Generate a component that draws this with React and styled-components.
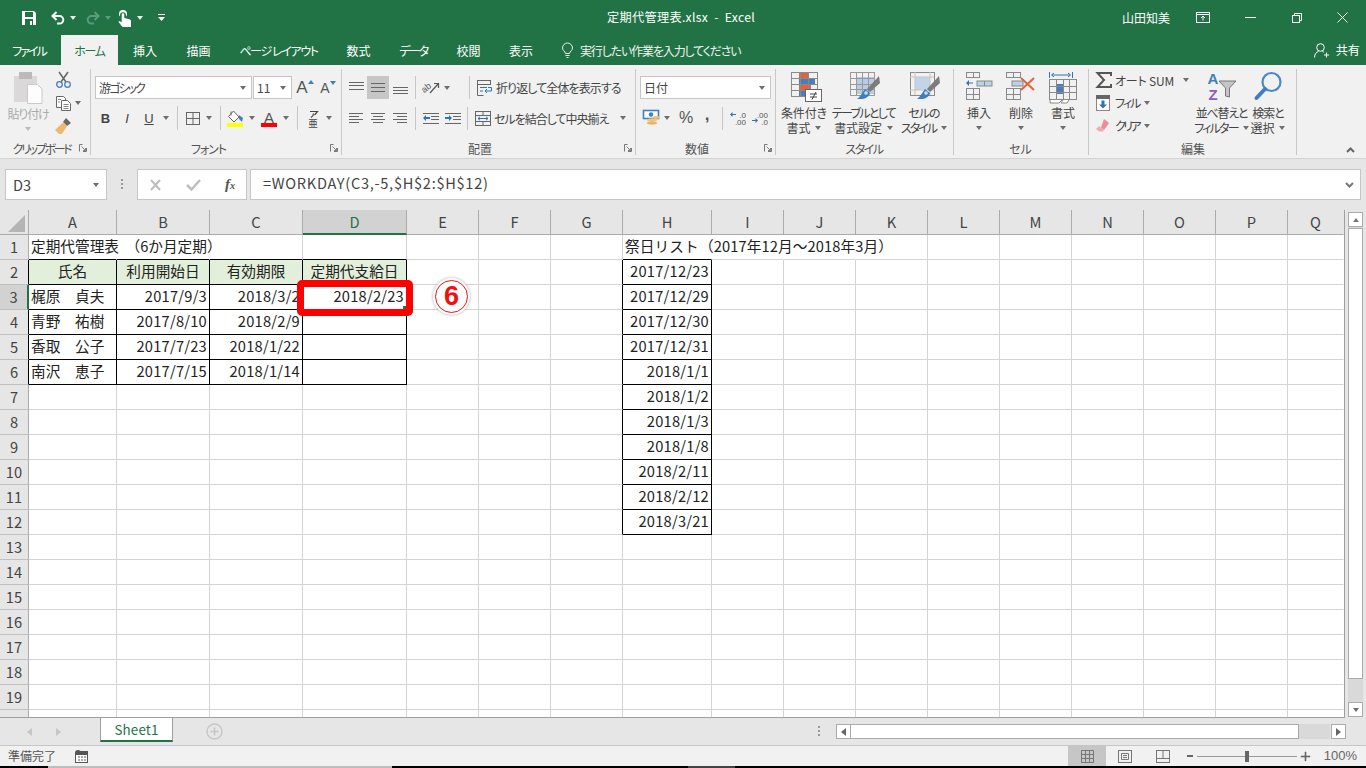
import React from "react";
import styled, { createGlobalStyle } from "styled-components";

const JP = `"Noto Sans CJK JP", "Noto Sans", sans-serif`;

const Global = createGlobalStyle`
  html, body { margin: 0; padding: 0; background: #e6e6e6; overflow: hidden; }
  #root { width: 1366px; height: 768px; }
  * { box-sizing: border-box; }
`;

const Page = styled.div`
  width: 1366px; height: 768px; display: flex; flex-direction: column;
  font-family: ${JP}; overflow: hidden; background: #e6e6e6;
`;

const Ls = styled.span`letter-spacing: ${(p) => p.$v}px;`;

/* title bar */
const TitleBar = styled.div`
  height: 35px; background: #217346; color: #fff; display: grid;
  grid-template-columns: 1fr auto 1fr; align-items: center; font-size: 12px;
  font-feature-settings: "palt";
`;
const Quick = styled.div`display: flex; align-items: center; padding: 1px 0 0 22px;`;
const Slot = styled.div`
  width: ${(p) => p.$w}px; height: ${(p) => p.$h || 20}px; flex: none;
  margin-left: ${(p) => p.$ml || 0}px; display: flex; align-items: center;
  justify-content: ${(p) => p.$start ? "flex-start" : "center"};
  background: ${(p) => p.$on ? "#c6c6c6" : "transparent"};
`;
const Caret = styled.span`
  display: block; width: 0; height: 0; border-left: 3.5px solid transparent; border-right: 3.5px solid transparent;
  border-top: 4px solid ${(p) => p.$c || "#6e6e6e"};
`;
const Title = styled.div`font-size: 12.2px; letter-spacing: .3px; white-space: pre; padding-bottom: 1px; margin-right: 4px; font-feature-settings: normal;`;
const WinControls = styled.div`display: flex; align-items: center; justify-content: flex-end; height: 35px;`;
const UserName = styled.div`width: 48px; font-size: 12px; white-space: nowrap; font-feature-settings: normal; margin-right: 26px;`;

/* tabs */
const TabBar = styled.div`
  height: 30px; background: #217346; display: flex; align-items: stretch; color: #fff;
  font-size: 12px; font-feature-settings: "palt"; position: relative;
`;
const Tab = styled.div`
  width: ${(p) => p.$w}px; display: flex; align-items: center; justify-content: center; white-space: nowrap;
  padding-right: ${(p) => p.$pr || 0}px;
  letter-spacing: ${(p) => p.$ls || 0}px;
  background: ${(p) => p.$on ? "#f1f1f1" : "transparent"}; color: ${(p) => p.$on ? "#217346" : "#fff"};
`;
const Tell = styled.div`display: flex; align-items: center; gap: 7px; margin-left: 15px; color: #f0f5f2; white-space: nowrap; letter-spacing: -1.15px;`;
const Share = styled.div`margin-left: auto; margin-right: 6px; display: flex; align-items: center; gap: 6px; font-feature-settings: normal; font-size: 12.2px;`;

/* ribbon */
const Ribbon = styled.div`
  height: 94px; background: #f1f1f1; border-bottom: 1px solid #d2d2d2; display: flex; align-items: flex-start;
  font-size: 12px; color: #444; font-feature-settings: "palt";
  padding-top: 4px;
`;
const Group = styled.div`
  width: ${(p) => p.$w}px; height: 86px; flex: none; display: flex; flex-direction: column;
  border-right: 1px solid #c8c8c8;
`;
const Body = styled.div`
  height: 72px; display: flex; padding-left: ${(p) => p.$pl || 0}px;
  flex-direction: ${(p) => p.$col ? "column" : "row"};
`;
const GroupLabel = styled.div`
  height: 14px; margin-top: 0; display: grid; grid-template-columns: 1fr auto 1fr; align-items: center;
  font-size: 12px; line-height: 14px; color: #555; padding-right: 3px;
  > span { grid-column: 2; position: relative; left: ${(p) => p.$shift || 0}px; top: 1px; white-space: nowrap; }
  svg { grid-column: 3; justify-self: end; }
`;
const Row = styled.div`display: flex; align-items: center; height: ${(p) => p.$h}px; margin-top: ${(p) => p.$mt || 0}px;`;
const Combo = styled.div`
  width: ${(p) => p.$w}px; height: 23px; background: #fff; border: 1px solid #c6c6c6; flex: none;
  margin-left: ${(p) => p.$ml || 0}px;
  display: flex; align-items: center; justify-content: space-between; padding: 0 5px 0 3px; font-size: 12px; color: #444;
  font-feature-settings: normal;
`;
const Palt = styled.span`font-feature-settings: "palt"; letter-spacing: -1.9px;`;
const VSep = styled.div`width: 1px; height: ${(p) => p.$h || 24}px; background: #c6c6c6; flex: none; margin: 0 ${(p) => p.$r || 4}px 0 ${(p) => p.$l || 5}px;`;
const Fmt = styled.span`
  font-family: "Liberation Sans", sans-serif; font-size: 13px; color: #444;
  font-weight: ${(p) => p.$b ? 700 : 400}; font-style: ${(p) => p.$i ? "italic" : "normal"};
  text-decoration: ${(p) => p.$u ? "underline" : "none"};
`;
const BigA = styled.span`font-family: "Liberation Sans", sans-serif; color: #555; font-size: ${(p) => p.$s}px; line-height: 1;`;
const Big = styled.div`
  width: ${(p) => p.$w}px; flex: none; display: flex; flex-direction: column; align-items: center;
  line-height: 15px; color: ${(p) => p.$off ? "#aaa" : "#444"}; white-space: nowrap;
`;
const BigIcon = styled.div`
  height: 36px; width: 100%; display: flex; align-items: flex-start; justify-content: center;
  padding-top: 3px; padding-left: ${(p) => p.$shift || 0}px;
`;
const BigLine = styled.div`height: 15px; display: flex; align-items: center; gap: 5px; margin-top: ${(p) => p.$mt || 0}px;`;
const SmallCol = styled.div`width: ${(p) => p.$w}px; flex: none; display: flex; flex-direction: column; padding-top: ${(p) => p.$pt || 0}px;`;
const SmallRow = styled.div`height: ${(p) => p.$h || 23}px; display: flex; align-items: center; gap: ${(p) => p.$gap || 0}px; white-space: nowrap;`;
const Percent = styled.span`font-family: "Liberation Sans", sans-serif; font-size: 16px; color: #555; font-weight: 400;`;
const Comma = styled.span`font-family: "Liberation Sans", sans-serif; font-size: 17px; color: #555; font-weight: 700; position: relative; top: -3px;`;
const Collapse = styled.div`flex: 1; height: 86px; display: flex; align-items: flex-end; justify-content: flex-end; padding: 0 11px 2px 0;`;

/* formula */
const FormulaBar = styled.div`height: 51px; padding: 10px 5px 10px 5px; display: flex; align-items: stretch; background: #e6e6e6;`;
const NameBox = styled.div`
  width: 102px; background: #fff; border: 1px solid #c6c6c6; display: flex; align-items: center; justify-content: space-between;
  padding: 0 7px 0 7px; font-size: 14.6px; color: #444;
`;
const Dots = styled.div`width: 30px; display: flex; align-items: center; justify-content: center; flex: none;`;
const FxBox = styled.div`
  width: 110px; background: #fff; border: 1px solid #c6c6c6; display: flex; align-items: center; flex: none;
  justify-content: space-between; padding: 0 11px 0 11px;
`;
const FxMark = styled.span`
  font-family: "Liberation Serif", serif; font-style: italic; font-weight: 700; font-size: 15px; color: #555;
  small { font-size: 10px; }
`;
const Input = styled.div`
  flex: 1; margin-left: 3px; background: #fff; border: 1px solid #c6c6c6; display: flex; align-items: center;
  justify-content: space-between; padding: 0 3px 4px 12px; font-size: 14.6px; color: #444; letter-spacing: .71px;
`;
const FormulaEnd = styled(Slot)`margin-top: 4px;`;

/* sheet */
const Worksheet = styled.div`height: 508px; display: flex; position: relative;`;
const GridBox = styled.div`
  width: 1345px; height: 508px; overflow: hidden; flex: none; background: #fff;
  border-right: 1px solid #9f9f9f; border-bottom: 1px solid #9f9f9f;
  display: grid; grid-template-columns: 29px 88px 93px 93px 104px 72px 72px 72px 89px repeat(8, 72px) 56px;
  grid-auto-rows: 25px;
`;
const Corner = styled.div`background: #e6e6e6; border-right: 1px solid #ababab; border-bottom: 1px solid #ababab; display: flex; padding: 5px 3px 2px 8px;`;
const ColHead = styled.div`
  background: ${(p) => p.$sel ? "#d2d2d2" : "#e6e6e6"}; color: ${(p) => p.$sel ? "#217346" : "#444"};
  border-right: 1px solid ${(p) => p.$last ? "transparent" : "#ababab"};
  border-bottom: ${(p) => p.$sel ? "2px solid #217346" : "1px solid #ababab"};
  display: flex; align-items: center; justify-content: center; font-size: 14.67px; padding-bottom: 1px;
`;
const RowHead = styled.div`
  background: ${(p) => p.$sel ? "#d2d2d2" : "#e6e6e6"}; color: #444;
  border-right: ${(p) => p.$sel ? "2px solid #217346" : p.$black ? "1px solid #000" : "1px solid #ababab"};
  border-bottom: 1px solid #c0c0c0;
  display: flex; align-items: center; justify-content: center; font-size: 14.67px; padding-bottom: 2px;
`;
const Cell = styled.div`
  position: relative; background: ${(p) => p.$fill || "#fff"}; color: #222; font-size: 14.67px; white-space: pre;
  letter-spacing: ${(p) => p.$ls || 0}px;
  border-right: 1px solid ${(p) => p.$r === "none" ? "transparent" : p.$r === "b" ? "#000" : "#d4d4d4"};
  border-bottom: 1px solid ${(p) => p.$b === "b" ? "#000" : "#d4d4d4"};
  display: flex; align-items: center; padding: 0 2px 3px;
  justify-content: ${(p) => p.$a === "c" ? "center" : p.$a === "r" ? "flex-end" : "flex-start"};
  overflow: ${(p) => p.$over ? "visible" : "hidden"}; z-index: ${(p) => p.$over ? 1 : 0};
`;
const Handle = styled.i`position: absolute; right: 0; bottom: 0; width: 3px; height: 3px; background: #217346;`;
const RedBox = styled.div`
  position: absolute; left: 297px; top: 70px; width: 116px; height: 36px; border: 7px solid #fe0000; border-radius: 5px; z-index: 3;
  box-shadow: 0 0 1px rgba(255,255,255,.8);
`;
const Badge = styled.div`
  position: absolute; left: 433px; top: 68px; width: 37px; height: 37px; border-radius: 50%; background: #fff; z-index: 3;
  box-shadow: 0 0 3px rgba(0,0,0,.35); display: flex; align-items: center; justify-content: center;
`;
const BadgeRing = styled.div`
  width: 33px; height: 33px; border-radius: 50%; border: 1.5px solid #f01010; color: #f01010;
  display: flex; align-items: center; justify-content: center; font: 700 27px/1 "Liberation Sans", sans-serif;
`;
const VScroll = styled.div`width: 15px; margin: 2px 0 0 3px; height: 505px; background: #d9d9d9; display: flex; flex-direction: column;`;
const SBtn = styled.div`
  width: ${(p) => p.$w || 15}px; height: ${(p) => p.$h || 15}px; background: #fff; border: 1px solid #ababab; flex: none;
  display: flex; align-items: center; justify-content: center;
`;
const SBtnBottom = styled(SBtn)`margin-top: auto;`;
const VThumb = styled.div`height: 451px; background: #fff; border: 1px solid #ababab; margin-top: 1px; flex: none;`;
const UpTri = styled(Caret)`border-top: 0; border-bottom: 4px solid #777;`;
const Tri = styled.span`
  display: block; width: 0; height: 0; border-top: 4px solid transparent; border-bottom: 4px solid transparent;
  border-${(p) => p.$left ? "right" : "left"}: 5px solid ${(p) => p.$c || "#666"};
`;

/* sheet tabs */
const TabRow = styled.div`height: 28px; background: #e6e6e6; border-bottom: 1px solid #c6c6c6; display: flex; align-items: flex-start;`;
const Nav = styled.div`width: 100px; height: 27px; display: flex; align-items: center; gap: 24px; padding-left: 27px; flex: none;`;
const SheetTab = styled.div`
  width: 73px; height: 24px; background: #fff; border: 1px solid #9f9f9f; border-top: 0; border-bottom: 2px solid #217346;
  color: #217346; font-size: 13.4px; display: flex; align-items: center; justify-content: center; flex: none; padding-bottom: 1px;
  letter-spacing: .15px;
`;
const Add = styled.div`width: 33px; margin-left: 33px; height: 27px; flex: none; display: flex; align-items: center;`;
const HScrollArea = styled.div`margin-left: auto; margin-right: 20px; width: 536px; display: flex; align-items: center; padding-top: 6px;`;
const HDots = styled.div`width: 18px; margin-right: 8px; display: flex; justify-content: center; flex: none;`;
const HTrack = styled.div`flex: 1; height: 15px; background: #d9d9d9; margin-right: 1px; display: flex;`;
const HThumb = styled.div`width: 448px; background: #fff; border: 1px solid #ababab; border-left: 0;`;

/* status */
const Status = styled.div`height: 20px; background: #f1f1f1; display: flex; align-items: center; font-size: 12px; color: #555; padding-left: 8px;`;
const StatusTxt = styled.span`width: 67px; flex: none; padding-bottom: 1px;`;
const Views = styled.div`margin-left: auto; display: flex; align-items: stretch; height: 20px;`;
const Zoom = styled.div`display: flex; align-items: center; margin-left: 5px; width: 123px;`;
const Slider = styled.div`width: 100px; height: 1px; background: #9a9a9a; margin: 0 4px; position: relative; flex: none;`;
const Knob = styled.i`position: absolute; left: 48px; top: -5px; width: 4px; height: 11px; background: #666;`;
const Pct = styled.span`width: 56px; line-height: 20px; text-align: right; font-family: "Liberation Sans", sans-serif; font-size: 13px; padding-right: 9px; flex: none; color: #666;`;
const Strip = styled.div`height: 2px; display: flex; background: #000;`;
const StripPart = styled.div`width: ${(p) => p.$w}px; flex: ${(p) => p.$w ? "none" : 1}; background: ${(p) => p.$c};`;

const S = styled.svg`display: block; flex: none; overflow: visible;`;
const Up = styled(S)`margin-bottom: ${(p) => p.$mb}px;`;

/* ---------- icons ---------- */
const Save = () => (<S width="14" height="14"><path d="M0 0h12l2 2v12H0z" fill="#fff"/><rect x="3" y="1" width="8" height="5" fill="#217346"/><rect x="3" y="8" width="8" height="6" fill="#217346"/><rect x="8" y="10" width="2" height="4" fill="#fff"/></S>);
const Undo = ({ c = "#fff" }) => (<S width="14" height="14"><path d="M5.5 1 1.5 5 5.5 9M2 5h6.5a3.800 3.800 0 0 1 0 7.600H6" fill="none" stroke={c} strokeWidth="2"/></S>);
const Redo = ({ c }) => (<S width="14" height="14"><path d="M8.500 1l4 4-4 4M12 5H5.500a3.800 3.800 0 0 0 0 7.600H8" fill="none" stroke={c} strokeWidth="2"/></S>);
const Touch = () => (<S width="13" height="17"><path d="M5 0a4 4 0 0 1 4 4 4 4 0 0 1-1 2.600V5a3 3 0 0 0-3-2.800A3 3 0 0 0 2 5v1.600A4 4 0 0 1 1 4a4 4 0 0 1 4-4z" fill="#fff"/><path d="M3.700 4.500a1.300 1.300 0 0 1 2.600 0V8l5 1.200c1 .3 1.700 1 1.700 2V17H4.500L.5 12l1-1 2.200 1.300z" fill="#fff"/></S>);
const Custom = () => (<S width="7" height="8"><rect width="7" height="1" fill="#fff"/><path d="M0 3h7L3.500 7z" fill="#fff"/></S>);
const RibbonOpt = () => (<S width="14" height="11" fill="none" stroke="#fff"><rect x=".5" y=".5" width="13" height="10"/><path d="M.5 2.500h13M7 8.500V4.500M5 6l2-2 2 2"/></S>);
const Restore = () => (<S width="10" height="10" fill="none" stroke="#fff"><rect x=".5" y="2.500" width="7" height="7"/><path d="M2.500 2.500v-2h7v7h-2"/></S>);
const CloseI = () => (<S width="11" height="11" fill="none" stroke="#fff"><path d="M.5.500l10 10M10.500.500l-10 10"/></S>);
const Bulb = () => (<S width="11" height="15" fill="none" stroke="#e8f0eb"><path d="M3.500 10.500C3 8 .5 7.500.5 5a5 5 0 0 1 10 0c0 2.500-2.500 3-3 5.500zM3.500 12.500h4M4.500 14.500h2"/></S>);
const Person = () => (<S width="16" height="15" fill="none" stroke="#fff"><circle cx="6.500" cy="4.500" r="3.800"/><path d="M.5 14.500c0-3.500 2-5.500 4-6M8.500 8.500c.5.200 1 .4 1.500.8M12.500 9.500v5M10 12h5"/></S>);

const Paste = () => (<S width="30" height="32"><path d="M1 4h23v26H1z" fill="#dbd8da"/><rect x="6" y="0" width="13" height="7" fill="#bdbabc"/><path d="M14.500 12.500h10l4.500 4.500v14.500H14.500z" fill="#fdfdfd" stroke="#c9c9c9"/></S>);
const Cut = () => (<S width="15" height="16" fill="none"><path d="M3 0l7 10M12 0L5 10" stroke="#666" strokeWidth="1.500"/><circle cx="3.500" cy="12.500" r="2.800" stroke="#4a7ebb" strokeWidth="1.300"/><circle cx="11.500" cy="12.500" r="2.800" stroke="#4a7ebb" strokeWidth="1.300"/></S>);
const Copy = () => (<S width="15" height="15" fill="#fff" stroke="#666"><path d="M.5.500h7l2 2v9H.5z"/><path d="M5.500 4.500h6l3 3v7h-9z"/><path d="M7.500 8.500h5M7.500 10.500h5M7.500 12.500h5M2 3.500h3M2 6h2" strokeWidth=".8"/></S>);
const Brush = () => (<S width="17" height="16"><path d="M11 0l5 5-4 3-4-4z" fill="#666"/><path d="M8 4.500l4 3.500-5 8H4L0 12z" fill="#eeb871"/></S>);
const Launcher = () => (<S width="8" height="8" fill="none" stroke="#777"><path d="M.5 7.500v-7h3M7.500 4v3.500H4" /><path d="M2.500 2.500l4 4M6.500 4v2.500H4" strokeWidth=".9"/></S>);
const Borders = () => (<S width="14" height="13" fill="none" stroke="#666"><rect x=".5" y=".5" width="13" height="12"/><path d="M7 .5v12M.5 6.500h13"/></S>);
const Fill = () => (<S width="17" height="17"><path d="M6.500 1l5.500 6-5 5-5.500-5.500z" fill="#fff" stroke="#666"/><path d="M4 1.500v4" stroke="#666"/><path d="M12 5l4 3-1 4-3-3z" fill="#4a7ebb"/><rect y="13" width="16" height="4" fill="#ffff00"/></S>);
const FontColor = () => (<S width="16" height="17"><text x="8" y="12.500" textAnchor="middle" fontFamily="Liberation Sans" fontSize="15" fill="#555">A</text><rect y="13" width="16" height="4" fill="#ff0000"/></S>);
const Phonetic = () => (<S width="16" height="17"><path d="M5 1.500h7.500L9.500 5M8.500 3.500c0 2-1 3-2.500 4" fill="none" stroke="#444" strokeWidth="1.200"/><text x="8" y="17" textAnchor="middle" fontFamily="Noto Sans CJK JP" fontSize="9.500" fill="#444">亜</text></S>);

const Lines = ({ w = 15, h = 13, y = [], x = [] }) => (
  <S width={w} height={h}>{y.map((v, i) => <rect key={i} x={x[i] ? x[i][0] : 0} y={v} width={x[i] ? x[i][1] : w} height="1" fill="#666"/>)}</S>
);
const Orient = () => (<S width="18" height="16"><text x="0" y="10" fontFamily="Liberation Sans" fontSize="9" fill="#555" transform="rotate(-40 5 10)">ab</text><path d="M7 13L15 4M11 3.500h4.500V8" fill="none" stroke="#555" strokeWidth="1.200"/></S>);
const Indent = ({ flip }) => (
  <S width="16" height="11">
    <g fill="#666">{[0, 10].map((v) => <rect key={v} x="0" y={v} width="16" height="1"/>)}{[3, 6].map((v) => <rect key={v} x="8" y={v} width="8" height="1"/>)}</g>
    {flip ? <path d="M0 4h4V2l3 3-3 3V6H0z" fill="#2f75b5"/> : <path d="M7 4H3V2L0 5l3 3V6h4z" fill="#2f75b5"/>}
  </S>
);
const Wrap = () => (<S width="16" height="16" fill="none"><rect x=".5" y=".5" width="13" height="4" stroke="#666"/><path d="M.5 4.500v11h6" stroke="#666"/><path d="M3 7.500h7M3 11h3" stroke="#2f75b5"/><path d="M11 7.500h3.500v3.500H8M10 9 8 11l2 2" stroke="#2f75b5"/></S>);
const Merge = () => (<S width="16" height="15" fill="none" stroke="#666"><rect x=".5" y=".5" width="15" height="14"/><path d="M.5 4.500h15M.5 10.500h15M8 .5v4M8 10.500v4"/><path d="M3 7.500h10M5 5.800 3 7.500l2 1.700M11 5.800l2 1.700-2 1.700" stroke="#2f75b5"/></S>);
const Money = () => (<S width="17" height="16"><rect x=".5" y=".5" width="15" height="8" fill="#fff" stroke="#3f7fc0" strokeWidth="1.600"/><circle cx="8" cy="4.500" r="2.200" fill="#3f7fc0"/><ellipse cx="9" cy="10" rx="5" ry="1.700" fill="#f1c27d"/><ellipse cx="9" cy="13" rx="5" ry="1.700" fill="#eeb560"/><ellipse cx="13" cy="7.500" rx="3.500" ry="1.400" fill="#f1c27d"/></S>);
const Dec = ({ up }) => (<S width="16" height="14">
  <text x="16" y="6.500" textAnchor="end" fontFamily="Liberation Sans" fontSize="8" fill="#555">{up ? ".0" : ".00"}</text>
  <text x="16" y="13.500" textAnchor="end" fontFamily="Liberation Sans" fontSize="8" fill="#555">{up ? ".00" : ".0"}</text>
  {up ? <path d="M6 3H2.500V1L0 3.500 2.500 6V4H6z" fill="#2f75b5"/> : <path d="M0 9h3.500V7L6 9.500 3.500 12v-2H0z" fill="#2f75b5"/>}
</S>);

const gridLines = (x0, y0, w, h, cols, rows, c = "#8a8a8a") => {
  const a = [];
  for (let i = 0; i <= cols; i++) a.push(<rect key={"c" + i} x={x0 + Math.round(i * w / cols)} y={y0} width="1" height={h + 1} fill={c}/>);
  for (let i = 0; i <= rows; i++) a.push(<rect key={"r" + i} x={x0} y={y0 + Math.round(i * h / rows)} width={w + 1} height="1" fill={c}/>);
  return a;
};
const CondFmt = () => (<S width="31" height="30">
  <rect x="8" y="1" width="9" height="6" fill="#e0633d"/><rect x="8" y="7" width="16" height="6" fill="#4a7ebb"/><rect x="8" y="13" width="12" height="6" fill="#e0633d"/><rect x="8" y="19" width="7" height="6" fill="#4a7ebb"/>
  {gridLines(0, 0, 26, 24, 3, 4)}
  <rect x="14.500" y="17.500" width="16" height="12" fill="#fff" stroke="#666"/>
  <path d="M19 22h7M19 25h7M25 20l-4 7.500" stroke="#444" fill="none"/>
</S>);
const PaintTail = () => (<g>
  <path d="M29 4l-12 13 3 3 10-9z" fill="#7c7c7c"/><path d="M15 17l5 4c-1 4-5 6-9 6h-4c3-2 5-6 8-10z" fill="#3f7fc0"/><circle cx="16" cy="21" r="1.800" fill="#cfe0f2"/>
</g>);
const TableFmt = () => (<S width="31" height="29">
  <rect x="7" y="5" width="17" height="17" fill="#b8cde4"/>{gridLines(0, 0, 24, 23, 4, 4, "#999")}<PaintTail/>
</S>);
const CellFmt = () => (<S width="31" height="29">
  <rect x="5" y="5" width="15" height="13" fill="#c2d4e8"/>{gridLines(0, 0, 24, 23, 1, 1, "#8a8a8a")}<path d="M0 5h24M5 0v23M20 0v23M0 18h24" stroke="#c5c5c5" fill="none"/><PaintTail/>
</S>);
const InsertI = () => (<S width="27" height="28">
  {gridLines(0, 0, 13, 5, 2, 1)}
  <path d="M7 10.500H3V8L0 11l3 3v-2.500h4z" fill="#2f75b5"/>
  <rect x="11" y="9" width="15" height="5" fill="#bcd2ea" stroke="#8a8a8a"/><path d="M18.500 9v5" stroke="#8a8a8a"/>
  {gridLines(0, 16, 13, 11, 2, 2)}
</S>);
const DeleteI = () => (<S width="30" height="28">
  {gridLines(0, 0, 14, 5, 2, 1)}
  <rect x="6" y="9" width="11" height="5" fill="#bcd2ea" stroke="#8a8a8a"/>
  {gridLines(0, 16, 14, 11, 2, 2)}
  <path d="M15 6l13 12M28 6L15 18" stroke="#e0633d" strokeWidth="2" fill="none"/>
</S>);
const FormatI = () => (<S width="29" height="33">
  <path d="M.5 0v6M23.500 0v6" stroke="#2f75b5"/><path d="M3 3h18M5 1 2.500 3 5 5M19 1l2.500 2L19 5" stroke="#2f75b5" fill="none"/>
  <rect x="8" y="12" width="7" height="10" fill="#4a7ebb"/>
  {gridLines(0, 7, 27, 20, 4, 3, "#8a8a8a")}
  <path d="M1 28v3h9l3-3M14 28l-2 3 6 0 2-3" fill="#fff" stroke="#8a8a8a"/>
</S>);
const Sigma = () => (<S width="15" height="16"><path d="M15 4V1H1.500L8 8l-6.500 7H15v-3" fill="none" stroke="#555" strokeWidth="2"/></S>);
const FillDown = () => (<S width="15" height="16"><rect x=".5" y=".5" width="13" height="15" fill="#fff" stroke="#888"/><rect x="0" y="0" width="14" height="4" fill="#666"/><path d="M5.500 5.500h3v4H11l-4 4-4-4h2.500z" fill="#2f75b5"/></S>);
const Eraser = () => (<S width="13" height="13"><path d="M8 0l5 4-5 7-3-2.500z" fill="#ee8a9c"/><path d="M5 8.500 8 11l-1 1.500H3L0 10l3-3z" fill="#f3aab7"/></S>);
const Sort = () => (<S width="31" height="29"><text x="7" y="12" textAnchor="middle" fontFamily="Liberation Sans" fontWeight="700" fontSize="15" fill="#3f7fc0">A</text><text x="7" y="28" textAnchor="middle" fontFamily="Liberation Sans" fontWeight="700" fontSize="15" fill="#8e5cb5">Z</text><path d="M13 9h17l-6.500 7v9l-4-1v-8z" fill="#c4c4c4" stroke="#777"/></S>);
const Find = () => (<S width="28" height="28" fill="none"><circle cx="17.500" cy="10" r="9" stroke="#4a8ac8" strokeWidth="2.200"/><path d="M11 17L2.500 26" stroke="#3f7fc0" strokeWidth="4" strokeLinecap="round"/></S>);
const XMark = () => (<S width="13" height="12" fill="none" stroke="#bdbdbd" strokeWidth="2"><path d="M2 1l9 10M11 1 2 11"/></S>);
const Check = () => (<S width="15" height="12" fill="none" stroke="#bdbdbd" strokeWidth="2.500"><path d="M1 6l4.500 4.500L14 1"/></S>);
const Vdots = () => (<S width="3" height="11" fill="#9a9a9a"><rect y="0" width="2" height="2"/><rect y="4" width="2" height="2"/><rect y="8" width="2" height="2"/></S>);
const Chevron = ({ c = "#777", up }) => (<S width="9" height="6" fill="none" stroke={c} strokeWidth="2"><path d={up ? "M1 5l3.500-3.500L8 5" : "M1 1l3.500 3.500L8 1"}/></S>);
const CornerTri = () => (<S width="17" height="17"><path d="M17 0v17H0z" fill="#b4b4b4"/></S>);
const PlusCircle = () => (<S width="17" height="17" fill="none" stroke="#c6c6c6"><circle cx="8.500" cy="8.500" r="7.500" strokeWidth="1.300"/><path d="M4.500 8.500h8M8.500 4.500v8" strokeWidth="1.600"/></S>);
const Macro = () => (<S width="13" height="13"><circle cx="3" cy="3" r="3" fill="#555"/><rect x="3" y="1" width="10" height="3" fill="#555"/><rect x=".5" y="4.500" width="12" height="8" fill="#fff" stroke="#555"/><path d="M3 7h2M6 7h2M9 7h2M3 10h2M6 10h2M9 10h2" stroke="#555"/></S>);
const ViewNormal = () => (<S width="13" height="13" fill="none" stroke="#777"><rect x=".5" y=".5" width="12" height="12"/><path d="M4.500.5v12M8.500.5v12M.5 4.500h12M.5 8.500h12"/></S>);
const ViewPage = () => (<S width="14" height="13" fill="none" stroke="#777"><rect x=".5" y=".5" width="13" height="12"/><path d="M3.500 3.500h7v6h-7zM5 5.500h4M5 7.500h4"/></S>);
const ViewBreak = () => (<S width="14" height="13" fill="none" stroke="#777"><rect x=".5" y=".5" width="13" height="12"/><path d="M.5 8.500h13M7 .5v8"/></S>);

/* ---------- sheet data ---------- */
const COLS = "ABCDEFGHIJKLMNOPQ".split("");
const GREEN = "#e2efda";
const NUM = 0.24;
const data = {
  A1: { t: "定期代管理表  （6か月定期）", over: true },
  A2: { t: "氏名", a: "c", f: GREEN }, B2: { t: "利用開始日", a: "c", f: GREEN }, C2: { t: "有効期限", a: "c", f: GREEN }, D2: { t: "定期代支給日", a: "c", f: GREEN },
  A3: { t: "梶原　貞夫" }, B3: { t: "2017/9/3", a: "r", ls: NUM }, C3: { t: "2018/3/2", a: "r", ls: NUM }, D3: { t: "2018/2/23", a: "r", ls: NUM },
  A4: { t: "青野　祐樹" }, B4: { t: "2017/8/10", a: "r", ls: NUM }, C4: { t: "2018/2/9", a: "r", ls: NUM },
  A5: { t: "香取　公子" }, B5: { t: "2017/7/23", a: "r", ls: NUM }, C5: { t: "2018/1/22", a: "r", ls: NUM },
  A6: { t: "南沢　恵子" }, B6: { t: "2017/7/15", a: "r", ls: NUM }, C6: { t: "2018/1/14", a: "r", ls: NUM },
  H1: { t: "祭日リスト（2017年12月～2018年3月）", over: true, ls: 0.12 },
};
["2017/12/23", "2017/12/29", "2017/12/30", "2017/12/31", "2018/1/1", "2018/1/2", "2018/1/3", "2018/1/8", "2018/2/11", "2018/2/12", "2018/3/21"].forEach((t, i) => { data["H" + (i + 2)] = { t, a: "r", ls: NUM }; });

const borderFor = (c, r) => {
  const inA = "ABCD".includes(c) && r >= 2 && r <= 6;
  const inH = c === "H" && r >= 2 && r <= 12;
  let right = "n", bottom = "n";
  if (inA || inH) { right = "b"; bottom = "b"; }
  if (c === "G" && r >= 2 && r <= 12) right = "b";
  if (r === 1 && ("ABCD".includes(c) || c === "H")) bottom = "b";
  if (r === 1 && ["A", "B", "H", "I", "J"].includes(c)) right = "none";
  if (c === "Q") right = "none";
  return { right, bottom };
};

const SheetGrid = () => {
  const cells = [<Corner key="corner"><CornerTri/></Corner>];
  COLS.forEach((c) => cells.push(<ColHead key={c} $sel={c === "D"} $last={c === "Q"}>{c}</ColHead>));
  for (let r = 1; r <= 20; r++) {
    cells.push(<RowHead key={"r" + r} $sel={r === 3} $black={r === 2 || (r >= 4 && r <= 6)}>{r}</RowHead>);
    COLS.forEach((c) => {
      const d = data[c + r] || {};
      const b = borderFor(c, r);
      cells.push(
        <Cell key={c + r} $a={d.a} $fill={d.f} $r={b.right} $b={b.bottom} $over={d.over} $ls={d.ls}>
          {d.t}
          {c + r === "D3" && <Handle/>}
        </Cell>
      );
    });
  }
  return <GridBox>{cells}</GridBox>;
};

const BigBtn = ({ w, icon, l1, l2, caret1, off, mt, shift, ls1 = -.1, ls2 = -.1 }) => (
  <Big $w={w} $off={off}>
    <BigIcon $shift={shift}>{icon}</BigIcon>
    <BigLine $mt={mt}><Ls $v={ls1}>{l1}</Ls></BigLine>
    <BigLine><Ls $v={ls2}>{l2}</Ls>{caret1 && <Caret/>}</BigLine>
  </Big>
);

export default function App() {
  return (
    <Page>
      <Global/>
      <TitleBar>
        <Quick>
          <Save/>
          <Slot $w={14} $ml={15}><Undo/></Slot>
          <Slot $w={8} $ml={4}><Caret $c="#e8f0eb"/></Slot>
          <Slot $w={14} $ml={9}><Redo c="#5c9a7c"/></Slot>
          <Slot $w={8} $ml={4}><Caret $c="#5c9a7c"/></Slot>
          <Slot $w={13} $ml={6}><Touch/></Slot>
          <Slot $w={8} $ml={5}><Caret $c="#e8f0eb"/></Slot>
          <Slot $w={7} $ml={14}><Custom/></Slot>
        </Quick>
        <Title>定期代管理表.xlsx  -  Excel</Title>
        <WinControls>
          <UserName>山田知美</UserName>
          <RibbonOpt/>
          <Slot $w={11} $ml={35} $h={2}><S width="11" height="1"><rect width="11" height="1" fill="#fff"/></S></Slot>
          <Slot $w={10} $ml={36}><Restore/></Slot>
          <Slot $w={11} $ml={35}><CloseI/></Slot>
          <Slot $w={18}/>
        </WinControls>
      </TitleBar>

      <TabBar>
        <Tab $w={61} $pr={3} $ls={-2}>ファイル</Tab>
        <Tab $w={57} $on $ls={-1.3}>ホーム</Tab>
        <Tab $w={54}>挿入</Tab>
        <Tab $w={53}>描画</Tab>
        <Tab $w={107} $ls={-1.35}>ページ レイアウト</Tab>
        <Tab $w={53}>数式</Tab>
        <Tab $w={57} $ls={-1.7}>データ</Tab>
        <Tab $w={53}>校閲</Tab>
        <Tab $w={52}>表示</Tab>
        <Tell><Bulb/>実行したい作業を入力してください</Tell>
        <Share><Person/>共有</Share>
      </TabBar>

      <Ribbon>
        <Group $w={91}>
          <Body $pl={3}>
            <BigBtn w={50} off mt={1} ls1={-1.2} icon={<Paste/>} l1="貼り付け" l2={<Caret $c="#bbb"/>}/>
            <SmallCol $w={37} $pt={0}>
              <Slot $w={21} $h={22}><Cut/></Slot>
              <SmallRow $h={24}><Slot $w={21} $h={22}><Copy/></Slot><Slot $w={8}><Caret/></Slot></SmallRow>
              <Slot $w={21} $h={22}><Brush/></Slot>
            </SmallCol>
          </Body>
          <GroupLabel $shift={-2}><span><Ls $v={-2.3}>クリップボード</Ls></span><Launcher/></GroupLabel>
        </Group>

        <Group $w={251}>
          <Body $col $pl={4}>
            <Row $h={23} $mt={7}>
              <Combo $w={157}><Palt>游ゴシック</Palt><Caret/></Combo>
              <Combo $w={39} $ml={1}><span>11</span><Caret/></Combo>
              <Slot $w={20} $ml={3}><BigA $s={17}>A</BigA><Up $mb={11} width="6" height="4"><path d="M0 4l3-4 3 4z" fill="#3f7fc0"/></Up></Slot>
              <Slot $w={20} $ml={3}><BigA $s={14}>A</BigA><Up $mb={9} width="6" height="4"><path d="M0 0l3 4 3-4z" fill="#3f7fc0"/></Up></Slot>
            </Row>
            <Row $h={30} $mt={4}>
              <Slot $w={21}><Fmt $b>B</Fmt></Slot>
              <Slot $w={22}><Fmt $i>I</Fmt></Slot>
              <Slot $w={22}><Fmt $u>U</Fmt></Slot>
              <Slot $w={12}><Caret/></Slot>
              <VSep/>
              <Slot $w={21}><Borders/></Slot>
              <Slot $w={12}><Caret/></Slot>
              <VSep/>
              <Slot $w={21}><Fill/></Slot>
              <Slot $w={12}><Caret/></Slot>
              <Slot $w={22}><FontColor/></Slot>
              <Slot $w={12}><Caret/></Slot>
              <VSep/>
              <Slot $w={16} $ml={3}><Phonetic/></Slot>
              <Slot $w={12} $ml={2}><Caret/></Slot>
            </Row>
          </Body>
          <GroupLabel $shift={-6}><span><Ls $v={-1}>フォント</Ls></span><Launcher/></GroupLabel>
        </Group>

        <Group $w={294}>
          <Body $col $pl={3}>
            <Row $h={23} $mt={7}>
              <Slot $w={22} $h={23}><Lines y={[1, 4, 8]} h={13}/></Slot>
              <Slot $w={22} $h={23} $on><Lines y={[1, 5, 9]} h={11} x={[[0, 14], [0, 14], [0, 14]]} w={14}/></Slot>
              <Slot $w={22} $h={23}><Lines y={[7, 10, 13]} h={15}/></Slot>
              <VSep $h={23} $l={4} $r={7}/>
              <Slot $w={18}><Orient/></Slot>
              <Slot $w={12}><Caret/></Slot>
              <VSep $h={23} $l={16} $r={7}/>
              <SmallRow $gap={3}><Wrap/><Ls $v={-.9}>折り返して全体を表示する</Ls></SmallRow>
            </Row>
            <Row $h={30} $mt={4}>
              <Slot $w={22}><Lines w={14} h={11} y={[0, 3, 6, 9]} x={[[0, 14], [0, 10], [0, 14], [0, 10]]}/></Slot>
              <Slot $w={22}><Lines w={14} h={11} y={[0, 3, 6, 9]} x={[[0, 14], [2, 10], [0, 14], [2, 10]]}/></Slot>
              <Slot $w={22}><Lines w={14} h={11} y={[0, 3, 6, 9]} x={[[0, 14], [4, 10], [0, 14], [4, 10]]}/></Slot>
              <VSep $h={23} $l={4} $r={7}/>
              <Slot $w={16}><Indent/></Slot>
              <Slot $w={16} $ml={6}><Indent flip/></Slot>
              <VSep $h={23} $l={6} $r={7}/>
              <SmallRow $gap={3}><Merge/><Ls $v={-1}>セルを結合して中央揃え</Ls><Slot $w={8} $ml={8}><Caret/></Slot></SmallRow>
            </Row>
          </Body>
          <GroupLabel $shift={-7}><span>配置</span><Launcher/></GroupLabel>
        </Group>

        <Group $w={140}>
          <Body $col $pl={4}>
            <Row $h={23} $mt={7}>
              <Combo $w={131}><span>日付</span><Caret/></Combo>
            </Row>
            <Row $h={30} $mt={4}>
              <Slot $w={17} $ml={3}><Money/></Slot>
              <Slot $w={8} $ml={3}><Caret/></Slot>
              <Slot $w={14} $ml={8}><Percent>%</Percent></Slot>
              <Slot $w={8} $ml={10}><Comma>,</Comma></Slot>
              <VSep $h={23} $l={11} $r={7}/>
              <Dec up/>
              <Slot $w={16} $ml={6}><Dec/></Slot>
            </Row>
          </Body>
          <GroupLabel $shift={-7}><span>数値</span><Launcher/></GroupLabel>
        </Group>

        <Group $w={178}>
          <Body $pl={2}>
            <BigBtn w={52} shift={4} icon={<CondFmt/>} l1="条件付き" l2="書式" caret1/>
            <BigBtn w={67} shift={3} ls1={-1.7} icon={<TableFmt/>} l1="テーブルとして" l2="書式設定" caret1/>
            <BigBtn w={54} shift={2} ls1={-1} ls2={-2} icon={<CellFmt/>} l1="セルの" l2="スタイル" caret1/>
          </Body>
          <GroupLabel $shift={1}><span><Ls $v={-1.5}>スタイル</Ls></span></GroupLabel>
        </Group>

        <Group $w={135}>
          <Body $pl={4}>
            <BigBtn w={42} icon={<InsertI/>} l1="挿入" l2={<Caret/>}/>
            <BigBtn w={42} icon={<DeleteI/>} l1="削除" l2={<Caret/>}/>
            <BigBtn w={42} icon={<FormatI/>} l1="書式" l2={<Caret/>}/>
          </Body>
          <GroupLabel $shift={1}><span>セル</span></GroupLabel>
        </Group>

        <Group $w={208}>
          <Body $pl={7}>
            <SmallCol $w={96} $pt={0}>
              <SmallRow $h={22}><Slot $w={19} $start><Sigma/></Slot><Ls $v={-.2}>オート SUM</Ls><Slot $w={8} $ml={8}><Caret/></Slot></SmallRow>
              <SmallRow $h={23}><Slot $w={19} $start><FillDown/></Slot><Ls $v={-2}>フィル</Ls><Slot $w={8} $ml={4}><Caret/></Slot></SmallRow>
              <SmallRow $h={23}><Slot $w={19} $start><Eraser/></Slot><Ls $v={-2.6}>クリア</Ls><Slot $w={8} $ml={4}><Caret/></Slot></SmallRow>
            </SmallCol>
            <BigBtn w={59} ls1={-1.2} ls2={-1.8} icon={<Sort/>} l1="並べ替えと" l2="フィルター" caret1/>
            <BigBtn w={34} ls1={-1} icon={<Find/>} l1="検索と" l2="選択" caret1/>
          </Body>
          <GroupLabel $shift={2}><span>編集</span></GroupLabel>
        </Group>
        <Collapse><Chevron up c="#666"/></Collapse>
      </Ribbon>

      <FormulaBar>
        <NameBox>D3<Caret/></NameBox>
        <Dots><Vdots/></Dots>
        <FxBox><XMark/><Check/><FxMark>f<small>x</small></FxMark></FxBox>
        <Input>=WORKDAY(C3,-5,$H$2:$H$12)<FormulaEnd $w={16}><Chevron/></FormulaEnd></Input>
      </FormulaBar>

      <Worksheet>
        <SheetGrid/>
        <VScroll>
          <SBtn><UpTri/></SBtn>
          <VThumb/>
          <SBtnBottom><Caret/></SBtnBottom>
        </VScroll>
        <RedBox/>
        <Badge><BadgeRing>6</BadgeRing></Badge>
      </Worksheet>

      <TabRow>
        <Nav><Tri $left $c="#c6c6c6"/><Tri $c="#c6c6c6"/></Nav>
        <SheetTab>Sheet1</SheetTab>
        <Add><PlusCircle/></Add>
        <HScrollArea>
          <HDots><Vdots/></HDots>
          <SBtn><Tri $left/></SBtn>
          <HTrack><HThumb/></HTrack>
          <SBtn><Tri/></SBtn>
        </HScrollArea>
      </TabRow>

      <Status>
        <StatusTxt>準備完了</StatusTxt>
        <Macro/>
        <Views>
          <Slot $w={38} $on $h={20}><ViewNormal/></Slot>
          <Slot $w={38} $h={20}><ViewPage/></Slot>
          <Slot $w={38} $h={20}><ViewBreak/></Slot>
          <Zoom>
            <S width="6" height="2"><rect width="6" height="2" fill="#666"/></S>
            <Slider><Knob/></Slider>
            <S width="9" height="9"><path d="M0 4h9v1H0zM4 0h1v9H4z" fill="#666" stroke="#666" strokeWidth=".6"/></S>
          </Zoom>
          <Pct>100%</Pct>
        </Views>
      </Status>
      <Strip>
        <StripPart $w={48} $c="#000"/>
        <StripPart $w={344} $c="#bdbdbd"/>
        <StripPart $w={296} $c="#000"/>
        <StripPart $w={47} $c="#444"/>
        <StripPart $c="#000"/>
      </Strip>
    </Page>
  );
}
